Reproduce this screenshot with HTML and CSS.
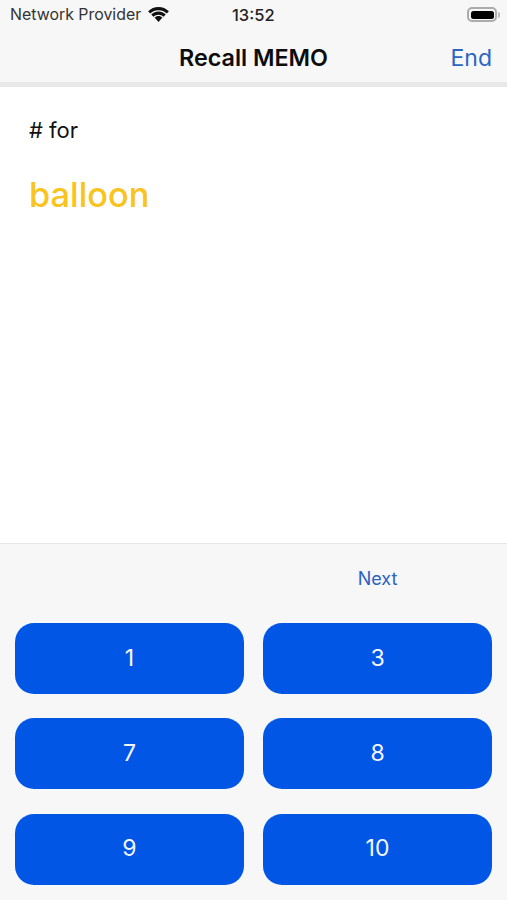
FILE: index.html
```html
<!DOCTYPE html>
<html lang="en">
<head>
    <meta charset="UTF-8">
    <meta name="viewport" content="width=device-width, initial-scale=1.0">
    <title>Recall MEMO</title>
    <link rel="stylesheet" href="styles.css">
</head>
<body>
<div class="app">
    <div class="status-bar">
        <div class="status-left">
            <span class="carrier">Network Provider</span>
            <svg class="wifi" width="21" height="15" viewBox="0.500 0.500 19 13.700">
                <path d="M10 3.400c3 0 5.600 1.100 7.600 3l1.900-2C16.900 1.900 13.600.5 10 .5S3.100 1.900.5 4.400l1.900 2c2-1.900 4.600-3 7.600-3z" fill="#111"/>
                <path d="M10 7.500c1.800 0 3.400.7 4.700 1.800l1.900-2C14.800 5.700 12.500 4.700 10 4.700S5.200 5.700 3.400 7.300l1.900 2C6.600 8.200 8.200 7.500 10 7.500z" fill="#111"/>
                <path d="M10 8.800c-1.400 0-2.700.5-3.600 1.400L10 14.200l3.600-4c-.9-.9-2.200-1.400-3.600-1.400z" fill="#111"/>
            </svg>
        </div>
        <span class="clock">13:52</span>
        <div class="battery">
            <div class="battery-body"><div class="battery-fill"></div></div>
            <div class="battery-cap"></div>
        </div>
    </div>

    <div class="nav-bar">
        <span class="nav-title">Recall MEMO</span>
        <a class="nav-end" href="#">End</a>
    </div>

    <div class="content">
        <p class="prompt"># for</p>
        <p class="word">balloon</p>
    </div>

    <div class="answer-panel">
        <div class="next-row">
            <a class="next-link" href="#">Next</a>
        </div>
        <div class="answer-grid">
            <button class="answer-btn">1</button>
            <button class="answer-btn">3</button>
            <button class="answer-btn">7</button>
            <button class="answer-btn">8</button>
            <button class="answer-btn">9</button>
            <button class="answer-btn">10</button>
        </div>
    </div>
</div>
</body>
</html>
```

FILE: styles.css
```css
* {
    box-sizing: border-box;
}

html, body {
    margin: 0;
    padding: 0;
}

body {
    font-family: Inter, 'Liberation Sans', Arial, sans-serif;
    color: #111;
    background-color: #f7f7f8;
}

.app {
    display: flex;
    flex-direction: column;
    height: 900px;
    overflow: hidden;
}

.status-bar {
    position: relative;
    display: flex;
    align-items: center;
    justify-content: space-between;
    height: 30px;
    padding: 0 7px 1px 10px;
    background-color: #f7f7f7;
}

.status-left {
    display: flex;
    align-items: center;
    gap: 7px;
}

.carrier {
    font-size: 15.900px;
    color: #333;
}

.wifi {
    display: block;
}

.clock {
    position: absolute;
    left: 232px;
    top: 5px;
    font-size: 16.500px;
    font-weight: 500;
    color: #222;
}

.battery {
    display: flex;
    align-items: center;
    gap: 1px;
}

.battery-body {
    width: 30px;
    height: 15px;
    padding: 1.500px;
    border: 2px solid #acacac;
    border-radius: 5px;
}

.battery-fill {
    height: 100%;
    background-color: #000;
    border-radius: 2.500px;
}

.battery-cap {
    width: 2px;
    height: 6px;
    background-color: #bbb;
    border-radius: 0 2px 2px 0;
}

.nav-bar {
    position: relative;
    display: flex;
    align-items: center;
    justify-content: center;
    height: 57px;
    padding-top: 3px;
    background-color: #f7f7f7;
    border-bottom: 5px solid #e8e8e8;
}

.nav-title {
    font-size: 23.300px;
    font-weight: 600;
    color: #0c0c0c;
}

.nav-end {
    position: absolute;
    right: 15px;
    top: 14px;
    font-size: 23px;
    color: #2b66c4;
    text-decoration: none;
}

.content {
    flex: 1;
    padding: 29px 29px 0;
    background-color: #fff;
}

.prompt {
    margin: 0;
    font-size: 22px;
    line-height: 28px;
    color: #111;
}

.word {
    margin: 30px 0 0;
    font-size: 34.300px;
    line-height: 42px;
    font-weight: 500;
    color: #f9c320;
}

.answer-panel {
    height: 357px;
    padding: 0 15px;
    background-color: #f7f7f8;
    border-top: 1px solid #e6e6e6;
}

.next-row {
    display: grid;
    grid-template-columns: 1fr 1fr;
    column-gap: 19px;
    height: 79px;
    padding-top: 24px;
}

.next-link {
    grid-column: 2;
    justify-self: center;
    font-size: 18px;
    line-height: 22px;
    color: #2b62c4;
    text-decoration: none;
}

.answer-grid {
    display: grid;
    grid-template-columns: 1fr 1fr;
    column-gap: 19px;
    row-gap: 24.300px;
}

.answer-btn {
    height: 71px;
    padding: 0 0 2px;
    border: none;
    border-radius: 19px;
    background-color: #0256e6;
    color: #f4f7ff;
    font-family: inherit;
    font-size: 23px;
    cursor: pointer;
}
```
